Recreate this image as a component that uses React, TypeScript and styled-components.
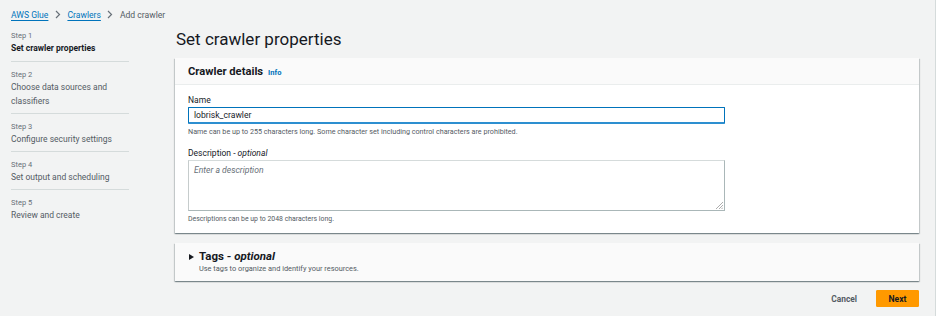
import React from "react";
import styled, { createGlobalStyle } from "styled-components";

const Global = createGlobalStyle`
  html, body { margin: 0; padding: 0; }
  body {
    background: #f2f3f3;
    font-family: Roboto, "Noto Sans", Arial, sans-serif;
    color: #16191f;
  }
`;

const Page = styled.div`
  width: 936px;
  height: 316px;
  box-sizing: border-box;
  border-right: 1px solid #d5dbdb;
  padding-right: 2px;
  overflow: hidden;
`;

const Inner = styled.div`
  width: 933px;
  height: 316px;
  box-sizing: border-box;
  padding: 7px 14px 0 11px;
`;

const Breadcrumbs = styled.nav`
  display: flex;
  align-items: center;
  height: 15px;
  font-size: 8.6px;
`;

const Crumb = styled.a`
  color: #0073bb;
  text-decoration: underline;
  text-underline-offset: 2px;
`;

const Current = styled.span`
  color: #545b64;
`;

const Sep = styled.span`
  display: inline-flex;
  width: 19px;
  justify-content: center;
`;

const Body = styled.div`
  display: flex;
  margin-top: 5px;
`;

const Steps = styled.ol`
  list-style: none;
  margin: 0;
  padding: 0;
  width: 118px;
  flex: none;
`;

const StepItem = styled.li<{ $last?: boolean }>`
  padding: 7px 0 5px;
  border-bottom: ${(p) => (p.$last ? "none" : "1px solid #d5dbdb")};
  &:first-child {
    padding-top: 3px;
    padding-bottom: 6px;
  }
`;

const StepNum = styled.div`
  font-size: 7.5px;
  color: #687078;
  line-height: 11px;
`;

const StepTitle = styled.div<{ $active?: boolean }>`
  font-size: 8.5px;
  line-height: 14px;
  font-weight: ${(p) => (p.$active ? 700 : 400)};
  color: ${(p) => (p.$active ? "#16191f" : "#545b64")};
`;

const Main = styled.div`
  flex: 1;
  margin-left: 46px;
  display: flex;
  flex-direction: column;
`;

const Title = styled.h1`
  margin: 0;
  font-size: 17px;
  font-weight: 400;
  line-height: 24px;
  height: 31px;
  padding-left: 1px;
  color: #16191f;
`;

const Card = styled.section`
  background: #fff;
  box-shadow: 0 1px 1px 0 rgba(0, 28, 36, 0.3), 1px 1px 1px 0 rgba(0, 28, 36, 0.15),
    -1px 1px 1px 0 rgba(0, 28, 36, 0.15);
`;

const CardHeader = styled.header`
  background: #fafafa;
  border-bottom: 1px solid #eaeded;
  height: 26px;
  display: flex;
  align-items: center;
  padding: 0 13px;
  gap: 5px;
`;

const CardTitle = styled.h2`
  margin: 0;
  font-size: 11.2px;
  font-weight: 700;
`;

const Info = styled.a`
  color: #0073bb;
  font-size: 7.5px;
  font-weight: 700;
  margin-top: 2px;
`;

const CardBody = styled.div`
  padding: 9px 13px 9px;
`;

const Field = styled.div<{ $gap?: number }>`
  margin-bottom: ${(p) => p.$gap ?? 0}px;
`;

const Label = styled.label`
  display: block;
  font-size: 8.5px;
  line-height: 12px;
  margin-bottom: 1px;
  color: #16191f;
  em { font-style: italic; }
`;

const Input = styled.div`
  width: 537px;
  height: 17px;
  box-sizing: border-box;
  border: 1px solid #0073bb;
  border-bottom: 2px solid #2d8fd0;
  border-radius: 1px;
  display: flex;
  align-items: center;
  padding-left: 5px;
  font-size: 8.6px;
  color: #16191f;
`;

const Hint = styled.div<{ $size?: number }>`
  font-size: ${(p) => p.$size ?? 7}px;
  line-height: 10px;
  color: #545b64;
  margin-top: 3px;
  white-space: nowrap;
`;

const TextArea = styled.div`
  position: relative;
  width: 537px;
  height: 51px;
  box-sizing: border-box;
  border: 1px solid #aab7b8;
  border-top-color: #d5dbdb;
  border-left-color: #c6cccc;
  padding: 4px 5px;
  font-size: 8.6px;
  font-style: italic;
  color: #687078;
`;

const Grip = styled.svg`
  position: absolute;
  right: 1px;
  bottom: 1px;
`;

const Expander = styled.section`
  margin-top: 10px;
  background: #fafafa;
  height: 38px;
  box-sizing: border-box;
  padding: 7px 14px;
  box-shadow: 0 1px 1px 0 rgba(0, 28, 36, 0.3), 1px 1px 1px 0 rgba(0, 28, 36, 0.15),
    -1px 1px 1px 0 rgba(0, 28, 36, 0.15);
  display: flex;
  gap: 5px;
`;

const Caret = styled.span`
  width: 0;
  height: 0;
  border-top: 3px solid transparent;
  border-bottom: 3px solid transparent;
  border-left: 5px solid #16191f;
  margin-top: 4px;
`;

const ExTitle = styled.div`
  font-size: 11.5px;
  font-weight: 700;
  line-height: 13px;
  em { font-style: italic; }
`;

const ExDesc = styled.div`
  font-size: 7.4px;
  color: #545b64;
  line-height: 11px;
`;

const Actions = styled.div`
  display: flex;
  justify-content: flex-end;
  align-items: center;
  gap: 19px;
  margin-top: 9px;
`;

const LinkButton = styled.button`
  background: none;
  border: none;
  padding: 0;
  font-family: inherit;
  font-size: 8.4px;
  font-weight: 700;
  color: #545b64;
`;

const PrimaryButton = styled.button`
  background: #ff9900;
  border: 1px solid #ff9900;
  border-radius: 1px;
  width: 43px;
  height: 17px;
  padding: 0;
  font-family: inherit;
  font-size: 8.6px;
  font-weight: 700;
  color: #16191f;
`;

const steps = [
  { n: "Step 1", t: "Set crawler properties", active: true },
  { n: "Step 2", t: "Choose data sources and classifiers" },
  { n: "Step 3", t: "Configure security settings" },
  { n: "Step 4", t: "Set output and scheduling" },
  { n: "Step 5", t: "Review and create" },
];

const Chevron = () => (
  <Sep>
    <svg width="6" height="9" viewBox="0 0 6 9">
      <path d="M1 1l3.5 3.5L1 8" fill="none" stroke="#687078" strokeWidth="1.2" />
    </svg>
  </Sep>
);

export default function App() {
  return (
    <Page>
      <Global />
      <Inner>
        <Breadcrumbs>
          <Crumb>AWS Glue</Crumb>
          <Chevron />
          <Crumb>Crawlers</Crumb>
          <Chevron />
          <Current>Add crawler</Current>
        </Breadcrumbs>
        <Body>
          <Steps>
            {steps.map((s, i) => (
              <StepItem key={s.n} $last={i === steps.length - 1}>
                <StepNum>{s.n}</StepNum>
                <StepTitle $active={s.active}>{s.t}</StepTitle>
              </StepItem>
            ))}
          </Steps>
          <Main>
            <Title>Set crawler properties</Title>
            <Card>
              <CardHeader>
                <CardTitle>Crawler details</CardTitle>
                <Info>Info</Info>
              </CardHeader>
              <CardBody>
                <Field $gap={10}>
                  <Label>Name</Label>
                  <Input>lobrisk_crawler</Input>
                  <Hint $size={7.2}>
                    Name can be up to 255 characters long. Some character set including control
                    characters are prohibited.
                  </Hint>
                </Field>
                <Field>
                  <Label>
                    Description - <em>optional</em>
                  </Label>
                  <TextArea>
                    Enter a description
                    <Grip width="7" height="7" viewBox="0 0 7 7">
                      <path d="M7 0L0 7M7 3L3 7M7 5.5L5.5 7" stroke="#999" strokeWidth="0.8" />
                    </Grip>
                  </TextArea>
                  <Hint $size={6.9}>Descriptions can be up to 2048 characters long.</Hint>
                </Field>
              </CardBody>
            </Card>
            <Expander>
              <Caret />
              <div>
                <ExTitle>
                  Tags - <em>optional</em>
                </ExTitle>
                <ExDesc>Use tags to organize and identify your resources.</ExDesc>
              </div>
            </Expander>
            <Actions>
              <LinkButton>Cancel</LinkButton>
              <PrimaryButton>Next</PrimaryButton>
            </Actions>
          </Main>
        </Body>
      </Inner>
    </Page>
  );
}
